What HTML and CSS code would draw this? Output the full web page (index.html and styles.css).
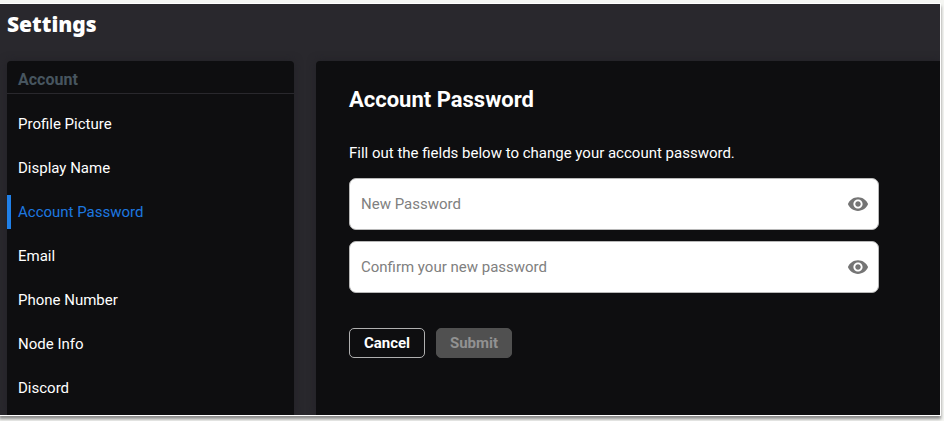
FILE: index.html
```html
<!DOCTYPE html>
<html lang="en">
<head>
<meta charset="utf-8">
<meta name="viewport" content="width=device-width, initial-scale=1">
<title>Settings</title>
<link rel="stylesheet" href="styles.css">
</head>
<body>
<div class="app">
  <h1 class="app-title">Settings</h1>
  <div class="columns">
    <nav class="sidebar" aria-labelledby="nav-heading">
      <h2 class="sidebar-heading" id="nav-heading">Account</h2>
      <ul class="nav-list">
        <li><a class="nav-link" href="#">Profile Picture</a></li>
        <li><a class="nav-link" href="#">Display Name</a></li>
        <li><a class="nav-link active" href="#" aria-current="page">Account Password</a></li>
        <li><a class="nav-link" href="#">Email</a></li>
        <li><a class="nav-link" href="#">Phone Number</a></li>
        <li><a class="nav-link" href="#">Node Info</a></li>
        <li><a class="nav-link" href="#">Discord</a></li>
      </ul>
    </nav>
    <main class="panel">
      <h2 class="panel-title">Account Password</h2>
      <p class="panel-text">Fill out the fields below to change your account password.</p>
      <form class="form">
        <div class="field">
          <input class="field-input" type="password" placeholder="New Password" aria-label="New Password">
          <button class="reveal" type="button" aria-label="Show new password">
            <svg class="eye" viewBox="0 0 24 24" aria-hidden="true"><path d="M12 4.500C7 4.500 2.730 7.610 1 12c1.730 4.390 6 7.500 11 7.500s9.270-3.110 11-7.500c-1.730-4.390-6-7.500-11-7.500zM12 17c-2.760 0-5-2.240-5-5s2.240-5 5-5 5 2.240 5 5-2.240 5-5 5zm0-8c-1.660 0-3 1.340-3 3s1.340 3 3 3 3-1.340 3-3-1.340-3-3-3z"/></svg>
          </button>
        </div>
        <div class="field">
          <input class="field-input" type="password" placeholder="Confirm your new password" aria-label="Confirm your new password">
          <button class="reveal" type="button" aria-label="Show confirmed password">
            <svg class="eye" viewBox="0 0 24 24" aria-hidden="true"><path d="M12 4.500C7 4.500 2.730 7.610 1 12c1.730 4.390 6 7.500 11 7.500s9.270-3.110 11-7.500c-1.730-4.390-6-7.500-11-7.500zM12 17c-2.760 0-5-2.240-5-5s2.240-5 5-5 5 2.240 5 5-2.240 5-5 5zm0-8c-1.660 0-3 1.340-3 3s1.340 3 3 3 3-1.340 3-3-1.340-3-3-3z"/></svg>
          </button>
        </div>
        <div class="actions">
          <button class="button" type="button">Cancel</button>
          <button class="button button-submit" type="submit" disabled>Submit</button>
        </div>
      </form>
    </main>
  </div>
</div>
</body>
</html>
```
FILE: styles.css
```css
* {
  box-sizing: border-box;
}

body {
  display: flex;
  height: 100vh;
  margin: 0;
  padding: 4px 4px 6px 0;
  overflow: hidden;
  background: #f5f6f3;
  color: #fff;
  font-family: Roboto, "Liberation Sans", sans-serif;
  font-size: 15px;
}

h1, h2, p, ul {
  margin: 0;
  padding: 0;
}

.app {
  display: flex;
  flex: 1;
  flex-direction: column;
  min-width: 0;
  overflow: hidden;
  background: #29282d;
  box-shadow: 0 0 0 1px #fff, 0 3px 3px 1px #888;
}

.app-title {
  padding: 7px 7px 0;
  font-family: "Noto Sans", sans-serif;
  font-size: 21px;
  font-weight: 900;
  line-height: 26px;
}

.columns {
  display: flex;
  flex: 1;
  gap: 22px;
  min-height: 0;
  margin-top: 24px;
  padding-left: 7px;
}

.sidebar {
  flex: 0 0 287px;
  border-radius: 4px 4px 0 0;
  background: #0e0e10;
  box-shadow: 0 0 8px #222127;
}

.sidebar-heading {
  padding: 8px 11px 2px;
  border-bottom: 1px solid #29282d;
  color: #47555f;
  font-size: 16px;
  font-weight: 700;
  line-height: 22px;
}

.nav-list {
  display: grid;
  gap: 10px;
  padding-top: 13px;
  list-style: none;
}

.nav-link {
  display: block;
  padding-left: 7px;
  border-left: 4px solid transparent;
  color: #fff;
  line-height: 34px;
  text-decoration: none;
}

.nav-link.active {
  border-color: #2080e8;
  color: #1d78e0;
}

.panel {
  flex: 1;
  min-width: 0;
  border-radius: 4px 0 0 0;
  background: #0e0e10;
  box-shadow: 0 0 8px #222127;
}

.panel-title {
  padding: 25px 33px 0;
  font-size: 22px;
  font-weight: 700;
  line-height: 28px;
}

.panel-text {
  padding: 29px 33px 0;
  line-height: 20px;
}

.form {
  display: grid;
  gap: 11px;
  width: 85%;
  margin: 15px 0 0 33px;
}

.field {
  display: flex;
  align-items: center;
  height: 52px;
  padding-right: 9px;
  border: 1px solid #b8b8b8;
  border-radius: 7px;
  background: #fff;
}

.field-input {
  flex: 1;
  min-width: 0;
  height: 100%;
  padding: 0 11px;
  border: 0;
  background: transparent;
  color: #222;
  font: inherit;
}

.field-input::placeholder {
  color: #808080;
}

.reveal {
  display: flex;
  padding: 0;
  border: 0;
  background: transparent;
}

.eye {
  width: 22px;
  height: 22px;
  fill: #757575;
}

.actions {
  display: flex;
  gap: 11px;
  margin-top: 24px;
}

.button {
  width: 76px;
  height: 30px;
  padding: 0;
  border: 1px solid #b0b0b0;
  border-radius: 5px;
  background: transparent;
  color: #fff;
  font: inherit;
  font-weight: 700;
}

.button-submit {
  border-color: #505050;
  background: #505050;
  color: #929292;
}
```
